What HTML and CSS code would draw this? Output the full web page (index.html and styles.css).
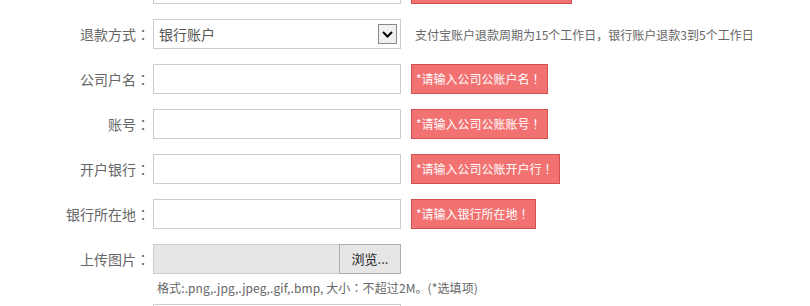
FILE: index.html
```html
<!DOCTYPE html>
<html lang="zh-CN">
<head>
<meta charset="utf-8">
<title>退款信息</title>
<link rel="stylesheet" href="styles.css">
</head>
<body>
<form class="form">
  <div class="row">
    <label class="label">联系电话<span class="p" lang="zh-TW">：</span></label>
    <div class="input"></div>
    <span class="msg">*请输入正确的银行卡号码<span class="p" lang="zh-TW">！</span></span>
  </div>
  <div class="row">
    <label class="label">退款方式<span class="p" lang="zh-TW">：</span></label>
    <div class="input select">
      <span class="select-text">银行账户</span>
      <span class="select-btn">
        <svg width="11" height="7" viewBox="0 0 11 7"><path d="M1 1 L5.5 5.5 L10 1" fill="none" stroke="#000" stroke-width="2"/></svg>
      </span>
    </div>
    <span class="tip">支付宝账户退款周期为15个工作日，银行账户退款3到5个工作日</span>
  </div>
  <div class="row">
    <label class="label">公司户名<span class="p" lang="zh-TW">：</span></label>
    <div class="input"></div>
    <span class="msg">*请输入公司公账户名<span class="p" lang="zh-TW">！</span></span>
  </div>
  <div class="row">
    <label class="label">账号<span class="p" lang="zh-TW">：</span></label>
    <div class="input"></div>
    <span class="msg">*请输入公司公账账号<span class="p" lang="zh-TW">！</span></span>
  </div>
  <div class="row">
    <label class="label">开户银行<span class="p" lang="zh-TW">：</span></label>
    <div class="input"></div>
    <span class="msg">*请输入公司公账开户行<span class="p" lang="zh-TW">！</span></span>
  </div>
  <div class="row">
    <label class="label">银行所在地<span class="p" lang="zh-TW">：</span></label>
    <div class="input"></div>
    <span class="msg">*请输入银行所在地<span class="p" lang="zh-TW">！</span></span>
  </div>
  <div class="row row-upload">
    <label class="label">上传图片<span class="p" lang="zh-TW">：</span></label>
    <div class="upload">
      <div class="upload-field"></div>
      <span class="upload-btn">浏览...</span>
    </div>
  </div>
  <div class="hint">格式:.png,.jpg,.jpeg,.gif,.bmp, 大小<span class="p" lang="zh-TW">：</span>不超过2M。(*选填项)</div>
  <div class="row">
    <label class="label">备注<span class="p" lang="zh-TW">：</span></label>
    <div class="input"></div>
  </div>
</form>
</body>
</html>
```

FILE: styles.css
```css
html, body {
  margin: 0;
  padding: 0;
  background: #fff;
}
body {
  font-family: "Microsoft YaHei", "Noto Sans CJK SC", "Noto Sans", sans-serif;
  color: #666;
  overflow: hidden;
}
.p {
  font-family: "Noto Sans CJK TC", "Noto Sans CJK JP", sans-serif;
}
.form {
  margin-top: -26px;
}
.row {
  display: flex;
  align-items: center;
  height: 30px;
  margin-bottom: 15px;
}
.row-upload {
  margin-bottom: 0;
}
.label {
  width: 153px;
  box-sizing: border-box;
  padding-right: 3px;
  text-align: right;
  font-size: 14px;
  color: #666;
  flex-shrink: 0;
}
.input {
  width: 248px;
  height: 30px;
  box-sizing: border-box;
  border: 1px solid #ccc;
  background: #fff;
  flex-shrink: 0;
}
.select {
  display: flex;
  align-items: center;
  justify-content: space-between;
  padding: 0 3px 0 5px;
}
.select-text {
  font-size: 14px;
  color: #555;
}
.select-btn {
  width: 19px;
  height: 20px;
  box-sizing: border-box;
  border: 1px solid #8a8a8a;
  background: #f0f0f0;
  display: flex;
  align-items: center;
  justify-content: center;
}
.select-btn svg {
  display: block;
  margin-top: 1px;
}
.msg {
  margin-left: 10px;
  height: 30px;
  box-sizing: border-box;
  border: 1px solid #d24f4f;
  background: #f27272;
  color: #fff;
  font-size: 12px;
  line-height: 28px;
  padding: 0 5px 0 4px;
  white-space: nowrap;
}
.tip {
  margin-left: 14px;
  font-size: 12px;
  color: #666;
  white-space: nowrap;
}
.upload {
  display: flex;
  width: 248px;
  height: 30px;
  flex-shrink: 0;
}
.upload-field {
  width: 186px;
  height: 30px;
  box-sizing: border-box;
  border: 1px solid #ccc;
  border-right: none;
  background: #e6e6e6;
}
.upload-btn {
  width: 62px;
  height: 30px;
  box-sizing: border-box;
  border: 1px solid #adadad;
  background: #e6e6e6;
  color: #222;
  font-size: 13px;
  line-height: 28px;
  text-align: center;
}
.hint {
  padding: 4px 0 6px 157px;
  line-height: 20px;
  font-size: 12px;
  color: #666;
  white-space: nowrap;
  letter-spacing: 0.1px;
}
```
